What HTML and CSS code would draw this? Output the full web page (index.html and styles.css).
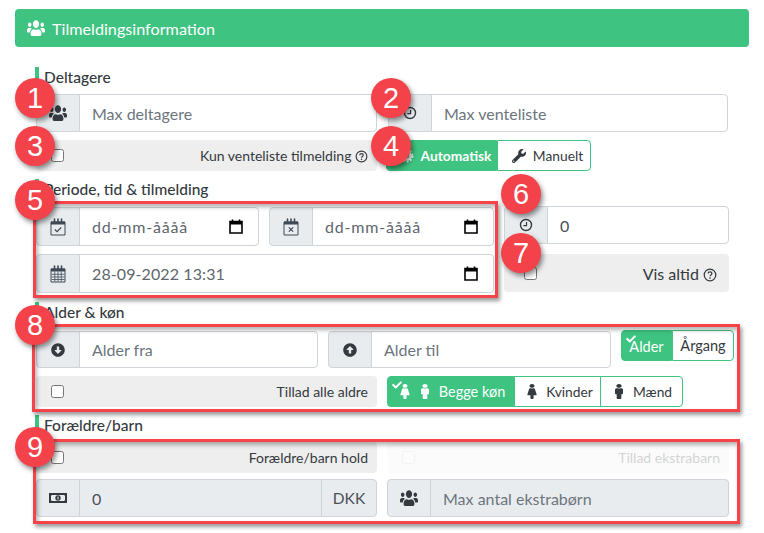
FILE: index.html
```html
<!DOCTYPE html>
<html lang="da">
<head>
<meta charset="utf-8">
<title>Tilmeldingsinformation</title>
<link rel="stylesheet" href="styles.css">
</head>
<body>
<svg class="sprite" aria-hidden="true">
  <symbol id="i-users" viewBox="0 0 640 512" preserveAspectRatio="none"><path d="M96 224c35.3 0 64-28.7 64-64s-28.7-64-64-64-64 28.7-64 64 28.7 64 64 64zm448 0c35.3 0 64-28.7 64-64s-28.7-64-64-64-64 28.7-64 64 28.7 64 64 64zm32 32h-64c-17.6 0-33.5 7.1-45.1 18.6 40.3 22.1 68.9 62 75.1 109.4h66c17.7 0 32-14.3 32-32v-32c0-35.3-28.7-64-64-64zm-256 0c61.9 0 112-50.1 112-112S381.9 32 320 32 208 82.1 208 144s50.1 112 112 112zm76.8 32h-8.3c-20.8 10-43.9 16-68.5 16s-47.6-6-68.5-16h-8.3C179.6 288 128 339.6 128 403.2V432c0 26.5 21.5 48 48 48h288c26.5 0 48-21.5 48-48v-28.8c0-63.6-51.6-115.2-115.2-115.2zm-223.7-13.4C161.5 263.1 145.6 256 128 256H64c-35.3 0-64 28.7-64 64v32c0 17.7 14.3 32 32 32h65.9c6.3-47.4 34.9-87.3 75.2-109.4z"/></symbol>
  <symbol id="i-wrench" viewBox="0 0 512 512"><path d="M507.73 109.1c-2.24-9.03-13.54-12.09-20.12-5.51l-74.36 74.36-67.88-11.31-11.31-67.88 74.36-74.36c6.62-6.62 3.43-17.9-5.66-20.16-47.38-11.74-99.55.91-136.58 37.93-39.64 39.64-50.55 97.1-34.05 147.2L18.74 402.76c-24.99 24.99-24.99 65.51 0 90.5 24.99 24.99 65.51 24.99 90.5 0l213.21-213.21c50.12 16.71 107.47 5.68 147.37-34.22 37.07-37.07 49.7-89.32 37.91-136.73zM64 472c-13.25 0-24-10.75-24-24 0-13.26 10.75-24 24-24s24 10.74 24 24c0 13.25-10.75 24-24 24z"/></symbol>
  <symbol id="i-check" viewBox="0 0 512 512"><path d="M173.898 439.404l-166.4-166.4c-9.997-9.997-9.997-26.206 0-36.204l36.203-36.204c9.997-9.998 26.207-9.998 36.204 0L192 312.69 432.095 72.596c9.997-9.997 26.207-9.997 36.204 0l36.203 36.204c9.997 9.997 9.997 26.206 0 36.204l-294.4 294.401c-9.998 9.997-26.207 9.997-36.204-.001z"/></symbol>
  <symbol id="i-down" viewBox="0 0 512 512"><path d="M504 256c0 137-111 248-248 248S8 393 8 256 119 8 256 8s248 111 248 248zM212 140v116h-70.9c-10.7 0-16.1 13-8.5 20.5l114.9 114.3c4.7 4.7 12.2 4.7 16.9 0l114.9-114.3c7.6-7.6 2.2-20.5-8.5-20.5H300V140c0-6.6-5.4-12-12-12h-64c-6.6 0-12 5.4-12 12z"/></symbol>
  <symbol id="i-up" viewBox="0 0 512 512"><path transform="rotate(180 256 256)" d="M504 256c0 137-111 248-248 248S8 393 8 256 119 8 256 8s248 111 248 248zM212 140v116h-70.9c-10.7 0-16.1 13-8.5 20.5l114.9 114.3c4.7 4.7 12.2 4.7 16.9 0l114.9-114.3c7.6-7.6 2.2-20.5-8.5-20.5H300V140c0-6.6-5.4-12-12-12h-64c-6.6 0-12 5.4-12 12z"/></symbol>
  <symbol id="i-male" viewBox="0 0 192 512" preserveAspectRatio="none"><path d="M96 0c35.346 0 64 28.654 64 64s-28.654 64-64 64-64-28.654-64-64S60.654 0 96 0m48 144h-11.36c-22.711 10.443-49.59 10.894-73.28 0H48c-26.51 0-48 21.49-48 48v136c0 13.255 10.745 24 24 24h16v136c0 13.255 10.745 24 24 24h64c13.255 0 24-10.745 24-24V352h16c13.255 0 24-10.745 24-24V192c0-26.51-21.49-48-48-48z"/></symbol>
  <symbol id="i-female" viewBox="0 0 256 512" preserveAspectRatio="none"><path d="M128 0c35.346 0 64 28.654 64 64s-28.654 64-64 64c-35.346 0-64-28.654-64-64S92.654 0 128 0m119.283 354.179l-48-192A24 24 0 0 0 176 144h-11.36c-22.711 10.443-49.59 10.894-73.28 0H80a24 24 0 0 0-23.283 18.179l-48 192C4.935 369.305 16.383 384 32 384h56v104c0 13.255 10.745 24 24 24h32c13.255 0 24-10.745 24-24V384h56c15.591 0 27.071-14.671 23.283-29.821z"/></symbol>
  <symbol id="i-clock" viewBox="0 0 16 16"><circle cx="8" cy="8" r="6.3" fill="none" stroke="currentColor" stroke-width="1.6"/><path d="M8.6 4.5v4.2H5" fill="none" stroke="currentColor" stroke-width="1.4"/></symbol>
  <symbol id="i-help" viewBox="0 0 16 16"><circle cx="8" cy="8" r="6.6" fill="none" stroke="currentColor" stroke-width="1.4"/><path d="M5.8 6.4c0-1.3 1-2 2.2-2s2.2.8 2.2 1.9c0 1.6-2.2 1.6-2.2 3.2" fill="none" stroke="currentColor" stroke-width="1.4"/><circle cx="8" cy="11.5" r=".95" fill="currentColor"/></symbol>
  <symbol id="i-cal" viewBox="0 0 16 18"><path d="M1 4h14v13H1z" fill="none" stroke="currentColor" stroke-width="1"/><path d="M1 3.500h14v3H1z" fill="currentColor"/><path d="M4.500 1v3.500M11.500 1v3.500M8 1v3.500" stroke="currentColor" stroke-width="1.600" stroke-linecap="round"/></symbol>
  <symbol id="i-cal-check" viewBox="0 0 16 18"><use href="#i-cal"/><path d="M4.800 11.500l2.200 2.200 4.200-4.200" fill="none" stroke="currentColor" stroke-width="1.200"/></symbol>
  <symbol id="i-cal-x" viewBox="0 0 16 18"><use href="#i-cal"/><path d="M5.800 9.300l4.400 4.400M10.200 9.300l-4.400 4.400" fill="none" stroke="currentColor" stroke-width="1.200"/></symbol>
  <symbol id="i-cal-grid" viewBox="0 0 16 18"><use href="#i-cal"/><path d="M1.500 9.300h13M1.500 12h13M1.500 14.500h13M4.800 6.500v10M8 6.500v10M11.200 6.500v10" fill="none" stroke="currentColor" stroke-width=".8"/></symbol>
  <symbol id="i-money" viewBox="0 0 18 12"><path d="M0 1h18v10H0z" fill="currentColor"/><path d="M2.800 3h12.400l.8 1v4l-.8 1H2.800L2 8V4z" fill="#e9ecef"/><circle cx="9" cy="6" r="2.700" fill="currentColor"/><path d="M9 4.500v3" stroke="#e9ecef" stroke-width="1"/></symbol>
  <symbol id="i-picker" viewBox="0 0 14 15"><path d="M1 2.500h12v11.500H1z" fill="none" stroke="#000" stroke-width="1.600"/><path d="M1 2h12v3.500H1z" fill="#000"/><path d="M3.500 0.500v2M10.500 0.500v2" stroke="#000" stroke-width="1.600"/></symbol>
  <symbol id="i-cog" viewBox="0 0 16 16"><circle cx="8" cy="8" r="4" fill="none" stroke="currentColor" stroke-width="3"/><circle cx="8" cy="8" r="6.300" fill="none" stroke="currentColor" stroke-width="2" stroke-dasharray="2 2"/></symbol>
</svg>

<main class="page">
  <h1 class="panel-title"><svg class="ico ico-title"><use href="#i-users"/></svg>Tilmeldingsinformation</h1>

  <section class="sec sec-first">
    <h2 class="sec-label">Deltagere</h2>
    <div class="cols-2 cols-first">
      <div class="group"><span class="addon"><svg class="ico ico-users"><use href="#i-users"/></svg></span><input class="field" placeholder="Max deltagere"></div>
      <div class="group"><span class="addon"><svg class="ico ico-16"><use href="#i-clock"/></svg></span><input class="field" placeholder="Max venteliste"></div>
      <label class="check-row"><input type="checkbox"><span>Kun venteliste tilmelding <svg class="ico ico-help"><use href="#i-help"/></svg></span></label>
      <div class="btns btns-mode">
        <button class="btn on btn-auto"><svg class="ico ico-14"><use href="#i-cog"/></svg>Automatisk</button>
        <button class="btn btn-man"><svg class="ico ico-14"><use href="#i-wrench"/></svg>Manuelt</button>
      </div>
    </div>
  </section>

  <section class="sec sec-period">
    <h2 class="sec-label">Periode, tid &amp; tilmelding</h2>
    <div class="period">
      <div class="period-dates">
        <div class="group group-tall"><span class="addon"><svg class="ico ico-cal"><use href="#i-cal-check"/></svg></span><div class="field date-field"><span class="date-ph">dd-mm-åååå</span><svg class="picker"><use href="#i-picker"/></svg></div></div>
        <div class="group group-tall"><span class="addon"><svg class="ico ico-cal"><use href="#i-cal-x"/></svg></span><div class="field date-field"><span class="date-ph">dd-mm-åååå</span><svg class="picker"><use href="#i-picker"/></svg></div></div>
        <div class="group group-tall span-2"><span class="addon"><svg class="ico ico-cal"><use href="#i-cal-grid"/></svg></span><div class="field date-field"><span class="date-ph date-val">28-09-2022 13:31</span><svg class="picker"><use href="#i-picker"/></svg></div></div>
      </div>
      <div class="period-side">
        <div class="group"><span class="addon"><svg class="ico ico-16"><use href="#i-clock"/></svg></span><input class="field field-val" value="0"></div>
        <label class="check-row check-row-big"><input type="checkbox"><span>Vis altid <svg class="ico ico-help ico-help-big"><use href="#i-help"/></svg></span></label>
      </div>
    </div>
  </section>

  <section class="sec sec-age">
    <h2 class="sec-label">Alder &amp; køn</h2>
    <div class="age-row">
      <div class="group"><span class="addon"><svg class="ico ico-16"><use href="#i-down"/></svg></span><input class="field" placeholder="Alder fra"></div>
      <div class="group"><span class="addon"><svg class="ico ico-16"><use href="#i-up"/></svg></span><input class="field" placeholder="Alder til"></div>
      <div class="btns btns-age">
        <button class="btn on btn-alder"><svg class="tick"><use href="#i-check"/></svg>Alder</button>
        <button class="btn btn-aargang">Årgang</button>
      </div>
    </div>
    <div class="cols-2 age-second">
      <label class="check-row"><input type="checkbox"><span>Tillad alle aldre</span></label>
      <div class="btns">
        <button class="btn on btn-both"><svg class="tick"><use href="#i-check"/></svg><svg class="ico ico-f"><use href="#i-female"/></svg><svg class="ico ico-m"><use href="#i-male"/></svg>Begge køn</button>
        <button class="btn btn-k"><svg class="ico ico-f"><use href="#i-female"/></svg>Kvinder</button>
        <button class="btn btn-d"><svg class="ico ico-m"><use href="#i-male"/></svg>Mænd</button>
      </div>
    </div>
  </section>

  <section class="sec">
    <h2 class="sec-label">Forældre/barn</h2>
    <div class="cols-2 family">
      <label class="check-row"><input type="checkbox"><span>Forældre/barn hold</span></label>
      <label class="check-row check-row-off"><input type="checkbox" disabled><span>Tillad ekstrabarn</span></label>
      <div class="group"><span class="addon"><svg class="ico ico-money"><use href="#i-money"/></svg></span><input class="field" value="0" disabled><span class="addon addon-end">DKK</span></div>
      <div class="group"><span class="addon"><svg class="ico ico-users"><use href="#i-users"/></svg></span><input class="field" placeholder="Max antal ekstrabørn" disabled></div>
    </div>
  </section>

  <div class="mark mark-5"></div>
  <div class="mark mark-8"></div>
  <div class="mark mark-9"></div>

  <span class="pin pin-1">1</span>
  <span class="pin pin-2">2</span>
  <span class="pin pin-3">3</span>
  <span class="pin pin-4">4</span>
  <span class="pin pin-5">5</span>
  <span class="pin pin-6">6</span>
  <span class="pin pin-7">7</span>
  <span class="pin pin-8">8</span>
  <span class="pin pin-9">9</span>
</main>
</body>
</html>
```
FILE: styles.css
```css
* { box-sizing: border-box; }
html, body { margin: 0; background: #fff; }
body {
  font-family: Lato, "Noto Sans", sans-serif;
  color: #343a40;
  font-size: 15px;
}
.sprite { position: absolute; width: 0; height: 0; overflow: hidden; }
.page {
  position: relative;
  width: 764px;
  height: 533px;
  padding: 9px 15px 0;
  overflow: hidden;
}
.ico { fill: currentColor; flex: none; display: inline-block; }
.panel-title {
  display: flex;
  align-items: center;
  margin: 0;
  width: 734px;
  height: 38px;
  padding-left: 12px;
  background: #3ec380;
  border-radius: 4px;
  color: #fff;
  font-size: 16.200px;
  font-weight: 400;
}
.ico-title { width: 18px; height: 18px; margin-right: 7px; }

.sec { margin: 8px 0 0 20px; width: 694px; }
.sec-first { margin-top: 20px; }
.sec-label {
  margin: 0 0 6px;
  height: 21px;
  line-height: 21px;
  border-left: 4px solid #3ec380;
  padding-left: 5px;
  font-size: 15.500px;
  font-weight: 500;
  color: #343a40;
}
.cols-2 {
  display: grid;
  grid-template-columns: 341px 342px;
  column-gap: 10px;
  row-gap: 8px;
  margin-left: 1px;
}
.cols-first .group:nth-child(2) { margin: 0 1px 0 1px; }
.group { display: flex; height: 38px; min-width: 0; }
.group-tall { height: 39px; }
.addon {
  flex: none;
  width: 44px;
  display: flex;
  align-items: center;
  justify-content: center;
  background: #e9ecef;
  border: 1px solid #ced4da;
  border-radius: 4px 0 0 4px;
}
.addon-end {
  border-radius: 0 4px 4px 0;
  margin-left: -1px;
  width: 56px;
  font-size: 15.500px;
  color: #495057;
}
.field {
  flex: 1;
  min-width: 0;
  margin-left: -1px;
  padding: 0 12px;
  height: 100%;
  border: 1px solid #ced4da;
  border-radius: 0 4px 4px 0;
  background: #fff;
  font: inherit;
  font-size: 16px;
  color: #495057;
}
.field::placeholder { color: #6c757d; opacity: 1; }
.field:disabled { background: #e9ecef; }
.group .field:not(:last-child) { border-radius: 0; }
.date-field { display: flex; align-items: center; justify-content: space-between; padding-right: 15px; }
.date-ph { letter-spacing: .8px; color: #5f666d; }
.date-val { letter-spacing: .1px; }
.picker { width: 14px; height: 15px; flex: none; }
.ico-16 { width: 14px; height: 14px; }
.ico-14 { width: 14px; height: 14px; margin-right: 7px; }
.ico-users { width: 18px; height: 18px; }
.ico-cal { width: 16px; height: 18px; color: #3f4a56; }
.ico-money { width: 18px; height: 12px; }
.ico-help { width: 13px; height: 13px; vertical-align: -2px; }
.ico-help-big { width: 14px; height: 14px; }

.check-row {
  display: flex;
  align-items: center;
  justify-content: space-between;
  height: 31px;
  padding: 0 9px 0 15px;
  background: #eee;
  border-radius: 4px;
  font-size: 14px;
}
.check-row input { margin: 0; width: 13px; height: 13px; }
.check-row-big { height: 38px; font-size: 16px; padding-right: 12px; margin-top: 10px; padding-left: 20px; }
.check-row-off { opacity: .22; }

.btns { display: flex; height: 31px; }
.btn {
  position: relative;
  display: flex;
  flex: none;
  align-items: center;
  justify-content: center;
  height: 100%;
  padding: 0;
  background: #fff;
  border: 1px solid #3ec380;
  border-radius: 0;
  font: inherit;
  font-size: 13.800px;
  color: #343a40;
}
.btn:first-child { border-radius: 4px 0 0 4px; }
.btn:last-child { border-radius: 0 4px 4px 0; }
.btn.on { background: #3ec380; color: #fff; }
.btns-mode { margin-left: -1px; }
.btn-auto { width: 111px; font-weight: 700; padding-left: 8px; }
.btn-man { width: 94px; padding-left: 7px; }
.tick { position: absolute; left: 4px; top: 3px; width: 10px; height: 10px; fill: #fff; }

.sec-period .sec-label { margin-bottom: 7px; }
.sec-age { margin-top: 9px; }
.period { display: flex; gap: 10px; margin-left: 1px; }
.period-dates {
  flex: none;
  width: 458px;
  display: grid;
  grid-template-columns: 223px 225px;
  column-gap: 10px;
  row-gap: 8px;
}
.span-2 { grid-column: 1 / 3; }
.period-side { flex: none; width: 225px; margin-top: -1px; }

.age-row { display: flex; gap: 10px; margin: 8px 0 0 1px; }
.sec-age .sec-label { margin-bottom: 0; }
.age-row .group { height: 37px; flex: none; }
.age-row .group:nth-child(1) { width: 282px; }
.age-row .group:nth-child(2) { width: 283px; }
.btns-age { margin-top: -1px; flex: none; }
.btn-alder { width: 51px; padding-top: 2px; font-size: 14.500px; }
.btn-aargang { width: 62px; font-size: 14.500px; }
.age-second { margin-top: 8px; }
.btn-both { width: 127px; padding-left: 4px; font-size: 14.500px; }
.btn-k { width: 87px; padding-left: 5px; }
.btn-d { width: 83px; margin-left: -1px; padding-left: 4px; }
.ico-f { width: 10px; height: 15px; margin-right: 9px; }
.ico-m { width: 8px; height: 15px; margin-right: 10px; }
.btn-both .ico-f { margin-right: 7px; }
.btn-both .ico-m { margin-left: 4px; }

.family { row-gap: 6px; }

.mark {
  position: absolute;
  border: 3px solid #f44449;
  box-shadow: 2px 3px 4px rgba(0, 0, 0, .4), inset 2px 3px 4px rgba(0, 0, 0, .3);
  pointer-events: none;
}
.mark-5 { left: 33px; top: 201px; width: 465px; height: 97px; }
.mark-8 { left: 32px; top: 324px; width: 708px; height: 88px; }
.mark-9 { left: 33px; top: 439px; width: 707px; height: 85px; }

.pin {
  position: absolute;
  left: 15px;
  width: 40px;
  height: 40px;
  border-radius: 50%;
  background: #f4424a;
  color: #fff;
  box-shadow: 2px 3px 5px rgba(0, 0, 0, .45);
  font-family: "Liberation Sans", Arial, sans-serif;
  font-size: 29px;
  line-height: 40px;
  text-align: center;
}
.pin-1 { top: 78px; }
.pin-2 { top: 78px; left: 371px; }
.pin-3 { top: 126px; }
.pin-4 { top: 126px; left: 371px; }
.pin-5 { top: 180px; }
.pin-6 { top: 174px; left: 501px; }
.pin-7 { top: 233px; left: 501px; }
.pin-8 { top: 305px; }
.pin-9 { top: 427px; }
```
